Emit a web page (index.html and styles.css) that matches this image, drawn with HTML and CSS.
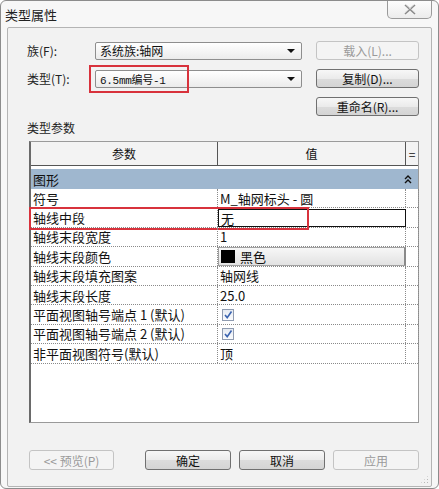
FILE: index.html
```html
<!DOCTYPE html>
<html lang="zh-CN">

<head>
  <meta charset="UTF-8">
  <title>类型属性</title>
  <link rel="stylesheet" href="styles.css">
</head>

<body>
  <div class="window">
    <div class="titlebar">
      <span class="title">类型属性</span>
      <div class="close-btn">
        <svg width="14" height="11" viewBox="0 0 14 11">
          <path d="M2 1 L12 10 M12 1 L2 10" stroke="#8a8a8a" stroke-width="1.6" fill="none"/>
          <path d="M3.5 1 L12 8.7 M10.5 1 L2 8.7" stroke="#cfcfcf" stroke-width="0.8" fill="none"/>
        </svg>
      </div>
    </div>

    <div class="panel">
      <div class="form-row">
        <label class="form-label">族(F):</label>
        <div class="combo">
          <span>系统族:轴网</span>
          <span class="combo-arrow"></span>
        </div>
        <button class="btn disabled">载入(L)...</button>
      </div>

      <div class="form-row">
        <label class="form-label">类型(T):</label>
        <div class="combo">
          <span class="mono">6.5mm编号-1</span>
          <span class="combo-arrow"></span>
          <div class="mark mark-type"></div>
        </div>
        <button class="btn">复制(D)...</button>
      </div>

      <div class="form-row">
        <span class="form-label"></span>
        <span class="combo-spacer"></span>
        <button class="btn">重命名(R)...</button>
      </div>

      <div class="section-label">类型参数</div>

      <div class="grid-box">
        <div class="grid-head">
          <div class="head-cell">参数</div>
          <div class="head-cell">值</div>
          <div class="head-cell eq">=</div>
        </div>

        <div class="group-row">
          <span>图形</span>
          <svg class="collapse" width="8" height="9" viewBox="0 0 8 9">
            <path d="M1 4 L4 1 L7 4 M1 8 L4 5 L7 8" stroke="#111" stroke-width="1.4" fill="none"/>
          </svg>
        </div>

        <div class="param-row">
          <div class="cell">符号</div>
          <div class="cell">M_轴网标头 - 圆</div>
          <div class="cell"></div>
        </div>

        <div class="param-row marked">
          <div class="cell">轴线中段</div>
          <div class="cell editing">无</div>
          <div class="cell"></div>
          <div class="mark mark-row"></div>
        </div>

        <div class="param-row">
          <div class="cell">轴线末段宽度</div>
          <div class="cell">1</div>
          <div class="cell"></div>
        </div>

        <div class="param-row">
          <div class="cell">轴线末段颜色</div>
          <div class="cell color-btn"><span class="swatch"></span>黑色</div>
          <div class="cell"></div>
        </div>

        <div class="param-row">
          <div class="cell">轴线末段填充图案</div>
          <div class="cell">轴网线</div>
          <div class="cell"></div>
        </div>

        <div class="param-row">
          <div class="cell">轴线末段长度</div>
          <div class="cell">25.0</div>
          <div class="cell"></div>
        </div>

        <div class="param-row">
          <div class="cell">平面视图轴号端点 1 (默认)</div>
          <div class="cell">
            <span class="checkbox">
              <svg width="10" height="10" viewBox="0 0 10 10"><path d="M2 5 L4.2 7.6 L8.5 1.5" stroke="#3b64b0" stroke-width="1.6" fill="none"/></svg>
            </span>
          </div>
          <div class="cell"></div>
        </div>

        <div class="param-row">
          <div class="cell">平面视图轴号端点 2 (默认)</div>
          <div class="cell">
            <span class="checkbox">
              <svg width="10" height="10" viewBox="0 0 10 10"><path d="M2 5 L4.2 7.6 L8.5 1.5" stroke="#3b64b0" stroke-width="1.6" fill="none"/></svg>
            </span>
          </div>
          <div class="cell"></div>
        </div>

        <div class="param-row">
          <div class="cell">非平面视图符号(默认)</div>
          <div class="cell">顶</div>
          <div class="cell"></div>
        </div>
      </div>

      <div class="footer-row">
        <button class="btn btn-foot disabled">&lt;&lt; 预览(P)</button>
        <div class="foot-actions">
          <button class="btn btn-foot">确定</button>
          <button class="btn btn-foot">取消</button>
          <button class="btn btn-foot disabled">应用</button>
        </div>
      </div>

      <div class="grip"></div>
    </div>
  </div>
</body>

</html>
```

FILE: styles.css
```css
* {
  margin: 0;
  padding: 0;
  box-sizing: border-box;
}

body {
  width: 439px;
  height: 489px;
  background: #ffffff;
  font-family: "Noto Sans CJK SC", "Liberation Sans", sans-serif;
  color: #111;
  overflow: hidden;
}

.window {
  width: 439px;
  height: 489px;
  background: #f7f7f7;
  border: 1px solid #8c8c8c;
  border-radius: 6px;
  display: flex;
  flex-direction: column;
  padding: 0 6px 1px 6px;
}

.titlebar {
  height: 26px;
  display: flex;
  align-items: flex-start;
  justify-content: space-between;
}

.title {
  font-size: 13px;
  line-height: 14px;
  margin-top: 7px;
  margin-left: -2px;
  color: #222;
}

.close-btn {
  width: 45px;
  height: 18px;
  border: 1px solid #9a9a9a;
  border-top: none;
  border-radius: 0 0 5px 5px;
  background: linear-gradient(#fdfdfd, #ececec);
  display: flex;
  align-items: center;
  justify-content: center;
  margin-right: 0;
}

.panel {
  position: relative;
  flex: 1;
  background: #f2f2f2;
  border: 1px solid #b4b4b4;
  border-radius: 2px;
  padding: 13px 12px 0 19px;
  display: flex;
  flex-direction: column;
}

.form-row {
  display: flex;
  align-items: center;
  height: 19px;
  margin-bottom: 9px;
}

.form-label {
  width: 68px;
  font-size: 12px;
  color: #222;
}

.combo {
  position: relative;
  width: 207px;
  height: 18px;
  border: 1px solid #8e8e8e;
  border-radius: 2px;
  background: linear-gradient(#ffffff, #ebebeb);
  display: flex;
  align-items: center;
  justify-content: space-between;
  padding: 0 6px 0 4px;
  font-size: 12px;
  margin-right: 14px;
}

.combo-spacer {
  width: 207px;
  margin-right: 14px;
}

.mono {
  font-family: "Liberation Mono", "Noto Sans CJK SC", monospace;
  font-size: 11px;
  letter-spacing: -0.3px;
}

.combo-arrow {
  width: 0;
  height: 0;
  border-left: 4px solid transparent;
  border-right: 4px solid transparent;
  border-top: 4px solid #111;
}

.mark {
  position: absolute;
  border: 2px solid #d8323c;
  pointer-events: none;
}

.mark-type {
  left: -7px;
  top: -6px;
  width: 100px;
  height: 28px;
}

.btn {
  width: 103px;
  height: 19px;
  border: 1px solid #707070;
  border-radius: 3px;
  background: linear-gradient(#f7f7f7 0%, #ebebeb 50%, #dcdcdc 51%, #d4d4d4 100%);
  font-family: "Noto Sans CJK SC", "Liberation Sans", sans-serif;
  font-size: 12px;
  color: #111;
}

.btn.disabled {
  border-color: #c4c4c4;
  background: #f4f4f4;
  color: #9a9a9a;
}

.section-label {
  font-size: 12px;
  line-height: 14px;
  color: #222;
  margin-top: -4px;
  margin-bottom: 6px;
}

.grid-box {
  width: 390px;
  height: 282px;
  margin-left: 2px;
  background: #ffffff;
  border: 1px solid #9a9a9a;
  border-left: 2px solid #6a6a6a;
  font-size: 13px;
}

.grid-head {
  display: grid;
  grid-template-columns: 187px 188px 1fr;
  height: 24px;
  background: #f3f3f3;
  border-bottom: 1px solid #555;
}

.head-cell {
  display: flex;
  align-items: center;
  justify-content: center;
  border-right: 1px solid #555;
  font-size: 12px;
}

.head-cell.eq {
  border-right: none;
}

.group-row {
  margin-top: 3px;
  height: 20px;
  background: #9fb7cf;
  display: flex;
  align-items: center;
  justify-content: space-between;
  padding: 0 6px 0 2px;
  font-size: 13px;
}

.param-row {
  position: relative;
  display: grid;
  grid-template-columns: 187px 188px 13px;
  height: 19.4px;
  border-bottom: 1px dotted #8a8a8a;
}

.cell {
  display: flex;
  align-items: center;
  padding-left: 2px;
  border-right: 1px dotted #8a8a8a;
  white-space: nowrap;
  overflow: hidden;
}

.cell.editing {
  border: 1px solid #111;
  margin-top: 1px;
}

.mark-row {
  left: -2px;
  top: -1px;
  width: 280px;
  height: 23px;
}

.color-btn {
  background: linear-gradient(#f7f7f7, #e2e2e2);
  border: 1px solid #a0a0a0;
  border-right: 2px solid #8a8a8a;
}

.swatch {
  width: 14px;
  height: 13px;
  background: #000;
  margin-right: 5px;
}

.checkbox {
  width: 12px;
  height: 12px;
  margin-left: 2px;
  border: 1px solid #8f9bb0;
  background: linear-gradient(#e6ebf2, #fafbfd);
  display: flex;
  align-items: center;
  justify-content: center;
}

.footer-row {
  display: flex;
  align-items: center;
  margin-top: 27px;
  margin-left: 2px;
}

.btn-foot {
  width: 86px;
  height: 20px;
}

.foot-actions {
  display: flex;
  gap: 8px;
  margin-left: 31px;
}

.grip {
  position: absolute;
  right: 2px;
  bottom: 2px;
  width: 9px;
  height: 9px;
  background-image: radial-gradient(circle, #b8b8b8 0.8px, transparent 1px);
  background-size: 3px 3px;
  clip-path: polygon(100% 0, 100% 100%, 0 100%);
}
```
